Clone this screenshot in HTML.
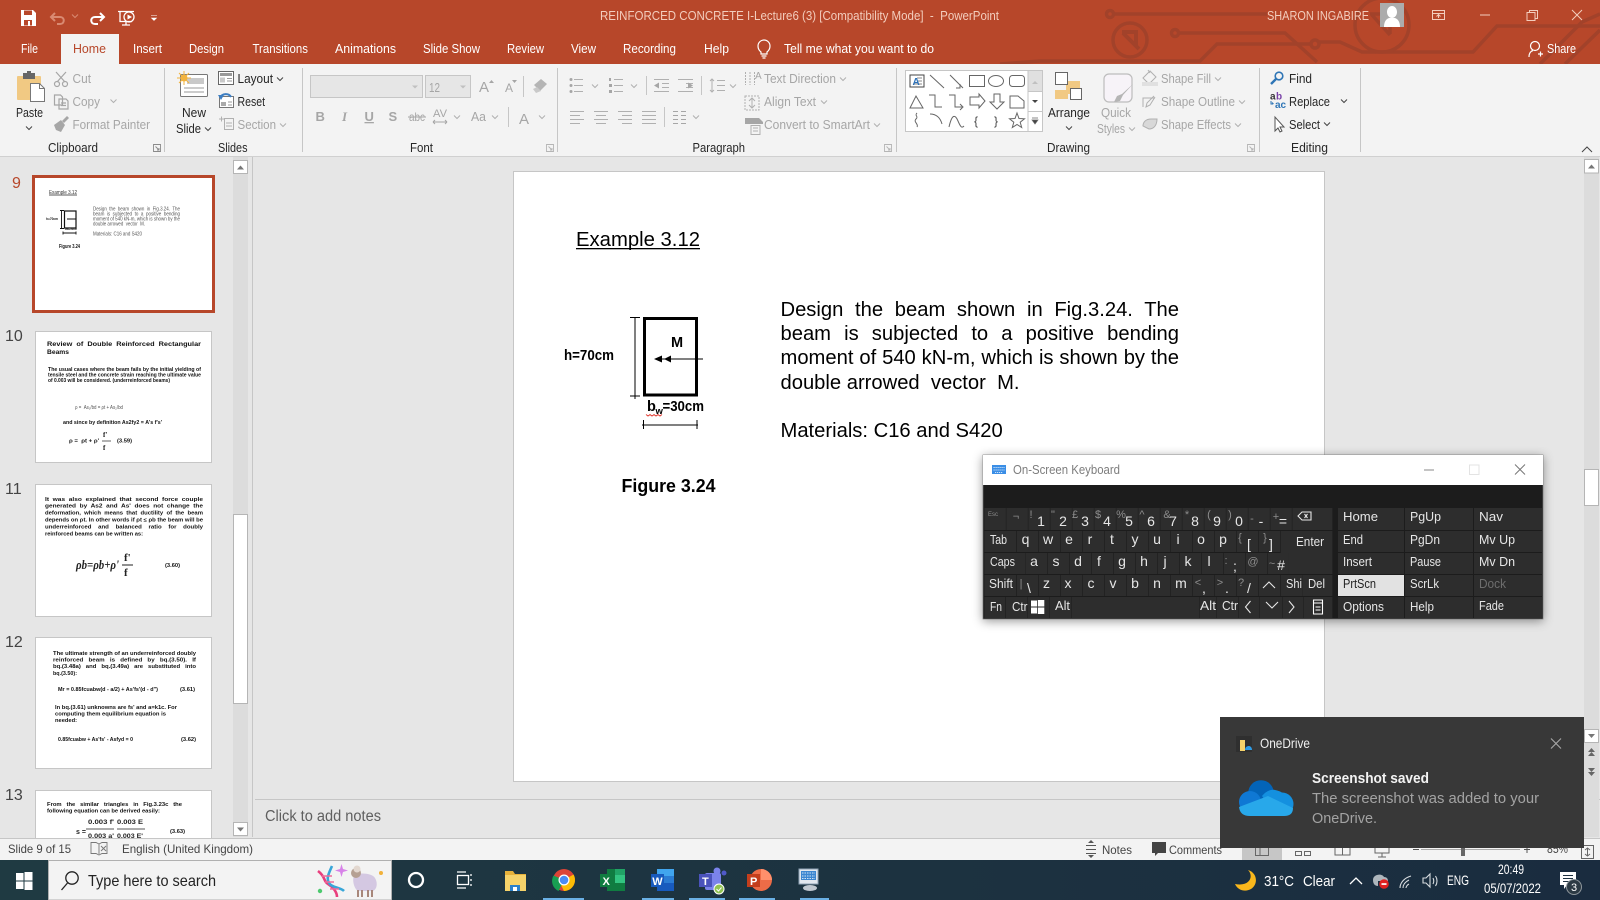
<!DOCTYPE html>
<html><head><meta charset="utf-8"><title>PowerPoint</title>
<style>
html,body{margin:0;padding:0;width:1600px;height:900px;overflow:hidden;background:#e6e6e6}
svg{position:absolute;left:0;top:0;display:block}
svg text{font-family:"Liberation Sans",sans-serif;white-space:pre}
.w{fill:#fff;font-size:13px}.k{fill:#262626;font-size:13px}.d{fill:#a6a6a6;font-size:13px}
.g{fill:#444;font-size:12px}
.kb{fill:#e6e6e6;font-size:13px}.kk{fill:#e6e6e6;font-size:14px;text-anchor:middle}.ks{fill:#8d8d8d;font-size:11px;text-anchor:middle}
.t{fill:#111;font-size:5px;font-weight:bold}.tg{fill:#555;font-size:5px}
.l{position:absolute;left:780.5px;width:398.5px;font:20.2px/24px "Liberation Sans",sans-serif;color:#000;white-space:nowrap;text-align:justify;text-align-last:justify}
</style></head><body>
<svg width="1600" height="900" viewBox="0 0 1600 900" xmlns="http://www.w3.org/2000/svg">
<defs>
<path id="ch" d="M-3-1.5 0 1.5 3-1.5" fill="none"/>
<linearGradient id="tb" x1="0" x2="1" y1="0" y2="0"><stop offset="0" stop-color="#1f3a42"/><stop offset="1" stop-color="#1a2c3f"/></linearGradient>
<filter id="sh" x="-5%" y="-5%" width="110%" height="115%"><feDropShadow dx="0" dy="2" stdDeviation="5" flood-color="#000" flood-opacity=".4"/></filter>
</defs>

<!-- title / tabs -->
<rect width="1600" height="64" fill="#b7472a"/>
<g fill="none" stroke="#a2422a" stroke-width="3.5">
<circle cx="1110" cy="14" r="3.5"/><path d="M1114 14H1267"/>
<circle cx="1130" cy="40" r="17"/><path d="M1122 32h14v14M1123 33l16 16" stroke-width="4"/>
<circle cx="1175" cy="33" r="3.5"/><path d="M1179 33H1285L1317 62"/>
<circle cx="1315" cy="44" r="4"/><path d="M1000 64 1040 61H1200L1217 44H1311M1319 42H1340L1362 52H1473L1497 26H1600"/>
<circle cx="1382" cy="25" r="27"/><path d="M1370 14h20v20M1372 15l18 20"/>
<path d="M1540 64 1582 22 1600 14M1565 64 1600 30"/>
</g>
<text class="w" x="600" y="20" textLength="399" lengthAdjust="spacingAndGlyphs" style="fill:#f3cdbd;font-size:12.5px">REINFORCED CONCRETE I-Lecture6 (3) [Compatibility Mode]  -  PowerPoint</text>
<text class="w" x="1267" y="20" textLength="102" lengthAdjust="spacingAndGlyphs" style="fill:#f3cdbd;font-size:12.5px">SHARON INGABIRE</text>
<rect x="1380" y="3" width="24" height="24" fill="#acacac"/>
<path d="M1392 6c3 0 5 3 5 6s-2 6-5 6-5-3-5-6 2-6 5-6ZM1384 27c0-5 2-8 5-9h6c3 1 5 4 5 9Z" fill="#fff"/>
<!-- window controls -->
<g fill="none" stroke="#f3cdbd" stroke-width="1">
<path d="M1432.500 10.500h12v9h-12zM1432.500 13.500h12M1438.500 18v-3M1436.500 16.500l2-2 2 2"/>
<path d="M1480 15h10"/>
<path d="M1527 12.500h8v8h-8zM1529.500 12.500v-2h8v8h-2"/>
<path d="M1572 10l10 10M1582 10l-10 10"/>
</g>
<!-- QAT -->
<path d="M21 10h12l3 3v13H21Z" fill="#fff"/><rect x="24" y="10.500" width="8" height="4.500" fill="#b7472a"/><rect x="24" y="20" width="8" height="5.500" fill="#b7472a"/><rect x="28" y="21" width="2" height="4.500" fill="#fff"/>
<g fill="none" stroke="#d98a72" stroke-width="2"><path d="M52 17h8c5 0 5 7 0 7h-3M55 13l-4 4 4 4"/></g>
<use href="#ch" x="75" y="16" stroke="#d98a72"/>
<g fill="none" stroke="#fff" stroke-width="2"><path d="M103 17h-8c-5 0-5 7 0 7h3M100 13l4 4-4 4"/></g>
<g fill="none" stroke="#fff" stroke-width="1.300"><path d="M118 11.500h16M120 11.500v10h12M126 22v3M122 25h8"/><circle cx="129" cy="17" r="5"/></g><path d="M127.500 14.500 132 17l-4.500 2.500Z" fill="#fff"/>
<path d="M151 15.500h6M151.500 18h5l-2.500 2.500Z" fill="#fff" stroke="#fff" stroke-width=".6"/>

<rect x="61" y="34" width="58" height="30" fill="#f3f3f3"/>
<g style="font-size:13px">
<text class="w" x="21" y="53" textLength="17" lengthAdjust="spacingAndGlyphs">File</text>
<text x="73" y="53" textLength="33" lengthAdjust="spacingAndGlyphs" style="fill:#b7472a;font-size:13px">Home</text>
<text class="w" x="133" y="53" textLength="29" lengthAdjust="spacingAndGlyphs">Insert</text>
<text class="w" x="189" y="53" textLength="35" lengthAdjust="spacingAndGlyphs">Design</text>
<text class="w" x="252.500" y="53" textLength="55.500" lengthAdjust="spacingAndGlyphs">Transitions</text>
<text class="w" x="335" y="53" textLength="61" lengthAdjust="spacingAndGlyphs">Animations</text>
<text class="w" x="423" y="53" textLength="57" lengthAdjust="spacingAndGlyphs">Slide Show</text>
<text class="w" x="507" y="53" textLength="37" lengthAdjust="spacingAndGlyphs">Review</text>
<text class="w" x="571" y="53" textLength="25" lengthAdjust="spacingAndGlyphs">View</text>
<text class="w" x="623" y="53" textLength="53" lengthAdjust="spacingAndGlyphs">Recording</text>
<text class="w" x="704" y="53" textLength="25" lengthAdjust="spacingAndGlyphs">Help</text>
<text class="w" x="784" y="53" textLength="150" lengthAdjust="spacingAndGlyphs">Tell me what you want to do</text>
<text class="w" x="1547" y="53" textLength="29" lengthAdjust="spacingAndGlyphs">Share</text>
</g>
<g fill="none" stroke="#fff" stroke-width="1.200">
<path d="M761 52c-2-1.500-3-3.500-3-6a6 6 0 0 1 12 0c0 2.500-1 4.500-3 6v2h-6ZM761.500 56h5M762.500 58h3"/>
<circle cx="1535" cy="46" r="4.500"/><path d="M1529 57c0-4 2-6 4-6.500M1538 54h5M1540.500 51.500v5"/>
</g>

<!-- ribbon -->
<rect y="64" width="1600" height="92" fill="#f3f3f3"/>
<rect y="156" width="1600" height="1" fill="#d0d0d0"/>
<g fill="#c6c6c6"><rect x="164" y="68" width="1" height="84"/><rect x="302" y="68" width="1" height="84"/><rect x="557" y="68" width="1" height="84"/><rect x="896" y="68" width="1" height="84"/><rect x="1259" y="68" width="1" height="84"/><rect x="1360" y="68" width="1" height="84"/></g>
<g>
<text class="k" x="48" y="152" textLength="50" lengthAdjust="spacingAndGlyphs">Clipboard</text>
<text class="k" x="218" y="152" textLength="29.500" lengthAdjust="spacingAndGlyphs">Slides</text>
<text class="k" x="410" y="152" textLength="23" lengthAdjust="spacingAndGlyphs">Font</text>
<text class="k" x="692.500" y="152" textLength="52.500" lengthAdjust="spacingAndGlyphs">Paragraph</text>
<text class="k" x="1047" y="152" textLength="43" lengthAdjust="spacingAndGlyphs">Drawing</text>
<text class="k" x="1291" y="152" textLength="37" lengthAdjust="spacingAndGlyphs">Editing</text>
</g>
<!-- launchers -->
<g fill="none" stroke="#8a8a8a" stroke-width=".9"><path d="M153.500 144.500h7v7h-7zM155.500 146.500l3.500 3.500M159 148v2h-2"/></g>
<g fill="none" stroke="#b5b5b5" stroke-width=".9"><path d="M546.500 144.500h7v7h-7zM548.500 146.500l3.500 3.500M552 148v2h-2"/><path d="M884.500 144.500h7v7h-7zM886.500 146.500l3.500 3.500M890 148v2h-2"/><path d="M1247.500 144.500h7v7h-7zM1249.500 146.500l3.500 3.500M1253 148v2h-2"/></g>
<path d="M1582 152l5-5 5 5" fill="none" stroke="#444" stroke-width="1"/>

<!-- clipboard -->
<rect x="17" y="76" width="24" height="24" rx="1" fill="#f1c983"/><rect x="23" y="73" width="12" height="6" fill="#666"/><rect x="27" y="71" width="4" height="3" fill="#666"/>
<path d="M30.500 83.500h9l5 5v13h-14Z" fill="#fff" stroke="#777"/><path d="M39.500 83.500v5h5" fill="none" stroke="#777"/>
<text class="k" x="16" y="117" textLength="27" lengthAdjust="spacingAndGlyphs">Paste</text><use href="#ch" x="29" y="128" stroke="#444"/>
<g fill="none" stroke="#a6a6a6" stroke-width="1.200"><path d="M56 72l9 10M66 72l-9 10"/><circle cx="57" cy="84" r="2.500"/><circle cx="65" cy="84" r="2.500"/><path d="M54.500 95h6l2 2v8h-8zM59 99h7l2 2v8h-9zM61 103h5M61 105.500h5"/></g>
<path d="M54 125l7-5 4 5-4 7-5-2Z" fill="#a6a6a6"/><path d="M62 121l5-5 2 2-5 5Z" fill="#a6a6a6"/>
<text class="d" x="72.500" y="83" textLength="18.500" lengthAdjust="spacingAndGlyphs">Cut</text>
<text class="d" x="72.500" y="106" textLength="27.500" lengthAdjust="spacingAndGlyphs">Copy</text><use href="#ch" x="113.500" y="101" stroke="#b0b0b0"/>
<text class="d" x="72.500" y="129" textLength="77.500" lengthAdjust="spacingAndGlyphs">Format Painter</text>
<!-- slides -->
<rect x="180.500" y="74.500" width="27" height="22" rx="1" fill="#fff" stroke="#777"/><rect x="187" y="78" width="17" height="6" fill="#c9c9c9"/><path d="M184 88h20M184 92h20" stroke="#999"/>
<circle cx="184" cy="78" r="3.500" fill="#f2b33d"/><path d="M184 71v14M177 78h14M179 73l10 10M189 73l-10 10" stroke="#f2b33d"/>
<text class="k" x="182" y="117" textLength="24" lengthAdjust="spacingAndGlyphs">New</text>
<text class="k" x="176" y="133" textLength="25" lengthAdjust="spacingAndGlyphs">Slide</text><use href="#ch" x="208" y="129" stroke="#444"/>
<rect x="218.500" y="71.500" width="15" height="13" fill="#fff" stroke="#666"/><rect x="220" y="73" width="12" height="3" fill="#999"/><rect x="220" y="77.500" width="5" height="5" fill="#c9c9c9"/><path d="M227 78.500h5M227 81h5" stroke="#999"/>
<text class="k" x="237.500" y="83" textLength="35.500" lengthAdjust="spacingAndGlyphs">Layout</text><use href="#ch" x="280" y="79" stroke="#444"/>
<rect x="219.500" y="96.500" width="14" height="11" fill="#fff" stroke="#777"/><rect x="221" y="102" width="5" height="4" fill="#aaa"/><path d="M228 102h4M228 105h4" stroke="#999"/>
<path d="M220 98c2-5 9-5 11-1" fill="none" stroke="#3d7ec2" stroke-width="2"/><path d="M218 95l6 0-3 5Z" fill="#3d7ec2"/>
<text class="k" x="237.500" y="106" textLength="27.500" lengthAdjust="spacingAndGlyphs">Reset</text>
<g stroke="#b0b0b0" fill="none"><path d="M224.500 118.500h9v11h-9zM226 123h6M226 126h6M219 119h5M221.500 116.500v5"/></g>
<text class="d" x="237.500" y="129" textLength="38.500" lengthAdjust="spacingAndGlyphs">Section</text><use href="#ch" x="283" y="125" stroke="#b0b0b0"/>
<!-- font -->
<rect x="310.500" y="75.500" width="112" height="22" fill="#e6e6e6" stroke="#c6c6c6"/><path d="M412 85.500h6l-3 3Z" fill="#c0c0c0"/>
<rect x="425.500" y="75.500" width="45" height="22" fill="#e6e6e6" stroke="#c6c6c6"/><path d="M460 85.500h6l-3 3Z" fill="#c0c0c0"/>
<text class="d" x="429" y="92" textLength="11" lengthAdjust="spacingAndGlyphs">12</text>
<g fill="#a6a6a6">
<text x="479" y="92" style="font-size:15px">A</text><text x="505" y="92" style="font-size:12px">A</text>
<text x="519" y="124" style="font-size:15px">A</text>
</g>
<path d="M489 83h5l-2.500-3ZM512 80h5l-2.500 3Z" fill="#a6a6a6"/>
<rect x="523" y="76" width="1" height="21" fill="#c6c6c6"/><rect x="508" y="107" width="1" height="20" fill="#c6c6c6"/>
<path d="M534 85l7-6 6 5-7 7Z" fill="#b5b5b5"/><path d="M533 89l3 4 5-2-4-4Z" fill="#c9c9c9"/>
<g fill="#a6a6a6">
<text x="315.500" y="121" style="font-size:13px;font-weight:bold">B</text>
<text x="342" y="121" style="font-size:13px;font-style:italic;font-family:'Liberation Serif',serif;font-weight:bold">I</text>
<text x="364.500" y="121" style="font-size:13px;font-weight:bold;text-decoration:underline">U</text>
<text x="388.500" y="121" style="font-size:13px;font-weight:bold">S</text>
<text x="409" y="121" textLength="16" lengthAdjust="spacingAndGlyphs" style="font-size:12px">abc</text>
<text x="433" y="117" textLength="14" lengthAdjust="spacingAndGlyphs" style="font-size:11px">AV</text>
<text x="471" y="121" textLength="15" lengthAdjust="spacingAndGlyphs" style="font-size:13px">Aa</text>
</g>
<path d="M408 117h18M433 122h14M433 122l2-2M433 122l2 2M447 122l-2-2M447 122l-2 2" stroke="#a6a6a6" fill="none"/>
<g stroke="#b0b0b0"><use href="#ch" x="457" y="117"/><use href="#ch" x="495" y="117"/><use href="#ch" x="542" y="117"/></g>
<!-- paragraph -->
<g stroke="#b0b0b0" fill="none">
<path d="M574 79.500h9M574 85.500h9M574 91.500h9M614 79.500h9M614 85.500h9M614 91.500h9"/>
<path d="M654 79.500h15M662 83.500h7M662 87.500h7M654 91.500h15M678 79.500h15M686 83.500h7M686 87.500h7M678 91.500h15"/>
<path d="M717 80.500h8M717 85.500h8M717 90.500h8M712 79v13M710 81l2-2 2 2M710 90l2 2 2-2"/>
<path d="M570 111.500h14M570 115.500h10M570 119.500h14M570 123.500h10"/>
<path d="M594 111.500h14M596 115.500h10M594 119.500h14M596 123.500h10"/>
<path d="M618 111.500h14M622 115.500h10M618 119.500h14M622 123.500h10"/>
<path d="M642 111.500h14M642 115.500h14M642 119.500h14M642 123.500h14"/>
<path d="M673 111.500h5M673 115.500h5M673 119.500h5M673 123.500h5M681 111.500h5M681 115.500h5M681 119.500h5M681 123.500h5" stroke="#a6a6a6"/>
<use href="#ch" x="595" y="86"/><use href="#ch" x="634" y="86"/><use href="#ch" x="733" y="86"/><use href="#ch" x="696" y="117"/>
<path d="M745.500 72v13M750 72v13M754.500 72v13M745 96h14v14h-14z" stroke-dasharray="2 1"/>
<path d="M752 98v10M749 101l3-3 3 3M749 105l3 3 3-3"/>
<path d="M751 125.500h9v9h-9zM753 128h5M753 131h5"/>
</g>
<g fill="#a6a6a6">
<circle cx="571" cy="79.500" r="1.500"/><circle cx="571" cy="85.500" r="1.500"/><circle cx="571" cy="91.500" r="1.500"/>
<path d="M654 85.500l5-3v6ZM693 85.500l-5-3v6Z"/>
<rect x="609" y="78" width="2" height="3"/><rect x="609" y="84" width="3" height="3"/><rect x="609" y="90" width="3" height="3"/>
<path d="M745 118h14l4 4v2h-18Z"/>
</g>
<rect x="646" y="76" width="1" height="19" fill="#c6c6c6"/><rect x="701" y="76" width="1" height="19" fill="#c6c6c6"/><rect x="664" y="107" width="1" height="20" fill="#c6c6c6"/>
<text x="755" y="79" style="fill:#a6a6a6;font-size:10px">A</text>
<text class="d" x="764" y="83" textLength="72" lengthAdjust="spacingAndGlyphs">Text Direction</text><use href="#ch" x="843" y="79" stroke="#b0b0b0"/>
<text class="d" x="764" y="106" textLength="52" lengthAdjust="spacingAndGlyphs">Align Text</text><use href="#ch" x="824" y="102" stroke="#b0b0b0"/>
<text class="d" x="764" y="129" textLength="106" lengthAdjust="spacingAndGlyphs">Convert to SmartArt</text><use href="#ch" x="877" y="125" stroke="#b0b0b0"/>
<!-- gallery -->
<rect x="905.500" y="70.500" width="137" height="61" fill="#fff" stroke="#c6c6c6"/>
<rect x="1028" y="71" width="14" height="20" fill="#e0e0e0"/><path d="M1028 70.500v61M1028 91.500h14M1028 111.500h14" stroke="#c6c6c6"/>
<path d="M1032 84l3-3 3 3Z" fill="#c0c0c0"/><path d="M1032 100h6l-3 3Z" fill="#444"/><path d="M1032 118h6M1032 120h6l-3 4Z" fill="#444" stroke="#666" stroke-width=".7"/>
<g fill="none" stroke="#666">
<rect x="910" y="75" width="14" height="12" stroke="#444"/><path d="M917 78h5M917 81h5M913 84h9" stroke="#888"/>
<path d="M930 75l14 13M950 75l13 13M960 84v4h-4"/>
<rect x="969.500" y="75.500" width="15" height="11"/><ellipse cx="996" cy="81" rx="7.500" ry="5.500"/><rect x="1009.500" y="75.500" width="15" height="11" rx="3"/>
<path d="M910 108l6-12 7 12ZM929 95h6v12h7M949 95h6v12h7M960 104l3 3-3 3M970 97h9v-3l6 7-6 7v-3h-9ZM994 94h6v8h4l-7 7-7-7h4ZM1010 96h8l6 5v7h-14Z"/>
<path d="M917 113c-3 3 2 3-1 6s3 5 1 8M930 114c6 0 10 3 12 10M949 127c3-13 6-13 9-6s4 7 6 5"/>
</g>
<text x="912.500" y="85" style="fill:#2b70b8;font-size:10px;font-weight:bold">A</text>
<text x="974" y="125" style="fill:#444;font-size:12px">{</text><text x="994" y="125" style="fill:#444;font-size:12px">}</text>
<path d="M1017 113l2 5.500 5.500.3-4.300 3.400 1.500 5.300-4.700-3-4.700 3 1.500-5.300-4.300-3.400 5.500-.3Z" fill="none" stroke="#666"/>
<!-- arrange -->
<rect x="1066" y="81" width="14" height="13" fill="#f1c983"/><rect x="1055" y="90" width="13" height="9" fill="#f1c983"/>
<rect x="1055.500" y="72.500" width="12" height="12" fill="#fff" stroke="#666"/><rect x="1070.500" y="88.500" width="11" height="11" fill="#fff" stroke="#666"/>
<text class="k" x="1048" y="117" textLength="42" lengthAdjust="spacingAndGlyphs">Arrange</text><use href="#ch" x="1069" y="128" stroke="#444"/>
<!-- quick styles -->
<rect x="1104" y="74" width="28" height="28" rx="5" fill="#f7f3f8" stroke="#bdbdbd" stroke-width="1.200"/><path d="M1133 84l-10 11-3 6-6 1 3-6 5-2Z" fill="#b5b5b5"/>
<text class="d" x="1101" y="117" textLength="30" lengthAdjust="spacingAndGlyphs">Quick</text>
<text class="d" x="1097" y="133" textLength="28" lengthAdjust="spacingAndGlyphs">Styles</text><use href="#ch" x="1132" y="129" stroke="#b0b0b0"/>
<g fill="none" stroke="#b0b0b0"><path d="M1143 78l7-7 6 6-7 7ZM1148 70l2 3"/><path d="M1143 107l0-9h12M1155 97l-5 8-4 2 1-4 7-7"/></g>
<rect x="1142" y="82" width="16" height="4" fill="#e0e0e0"/>
<path d="M1143 126c0-4 3-7 8-7h6c0 6-3 10-8 10Z" fill="#d8d8d8" stroke="#b0b0b0"/>
<text class="d" x="1161" y="83" textLength="50" lengthAdjust="spacingAndGlyphs">Shape Fill</text><use href="#ch" x="1218" y="79" stroke="#b0b0b0"/>
<text class="d" x="1161" y="106" textLength="74" lengthAdjust="spacingAndGlyphs">Shape Outline</text><use href="#ch" x="1242" y="102" stroke="#b0b0b0"/>
<text class="d" x="1161" y="129" textLength="70" lengthAdjust="spacingAndGlyphs">Shape Effects</text><use href="#ch" x="1238" y="125" stroke="#b0b0b0"/>
<!-- editing -->
<circle cx="1279" cy="76" r="3.800" fill="none" stroke="#2e75b6" stroke-width="1.600"/><path d="M1276 79l-5 5" stroke="#2e75b6" stroke-width="2.400"/>
<text x="1270" y="99.500" style="fill:#333;font-size:10px;font-weight:bold">a</text><text x="1276" y="99.500" style="fill:#7a43a8;font-size:10px;font-weight:bold">b</text>
<text x="1275" y="108" style="fill:#2e75b6;font-size:10px;font-weight:bold">ac</text><path d="M1271 101v3h2M1272 102.500l1.500 1.500" fill="none" stroke="#2e75b6"/>
<path d="M1275 117v14l3-3 2 4 2-1-2-4h4Z" fill="#fff" stroke="#555"/>
<text class="k" x="1289" y="83" textLength="23" lengthAdjust="spacingAndGlyphs">Find</text>
<text class="k" x="1289" y="106" textLength="41" lengthAdjust="spacingAndGlyphs">Replace</text><use href="#ch" x="1344" y="101" stroke="#444"/>
<text class="k" x="1289" y="129" textLength="31" lengthAdjust="spacingAndGlyphs">Select</text><use href="#ch" x="1327" y="124" stroke="#444"/>

<!-- thumbnail pane -->
<rect x="233" y="157" width="15" height="680" fill="#dcdcdc"/>
<rect x="252" y="157" width="1" height="680" fill="#c6c6c6"/>
<rect x="233.500" y="160.500" width="14" height="13" fill="#fff" stroke="#b5b5b5"/><path d="M237 169.500l3.500-4 3.500 4Z" fill="#777"/>
<rect x="233.500" y="514.500" width="14" height="189" fill="#fff" stroke="#b5b5b5"/>
<rect x="233.500" y="822.500" width="14" height="13" fill="#fff" stroke="#b5b5b5"/><path d="M237 827.500h7l-3.500 4Z" fill="#777"/>

<text x="12" y="188" style="fill:#b7472a;font-size:16px">9</text>
<text x="5" y="341" style="fill:#444;font-size:16px">10</text>
<text x="5" y="494" style="fill:#444;font-size:16px">11</text>
<text x="5" y="647" style="fill:#444;font-size:16px">12</text>
<text x="5" y="800" style="fill:#444;font-size:16px">13</text>

<!-- thumb 9 -->
<rect x="33.500" y="176.500" width="180" height="135" fill="#fff" stroke="#b7472a" stroke-width="3"/>
<text class="tg" x="49" y="194" textLength="28" lengthAdjust="spacingAndGlyphs" style="fill:#333">Example 3.12</text><path d="M49 195h28" stroke="#222" stroke-width=".8"/>
<text class="tg" x="93" y="210.500" textLength="87" lengthAdjust="spacingAndGlyphs">Design  the  beam  shown  in  Fig.3.24.  The</text>
<text class="tg" x="93" y="215.500" textLength="87" lengthAdjust="spacingAndGlyphs">beam  is  subjected  to  a  positive  bending</text>
<text class="tg" x="93" y="220.500" textLength="87" lengthAdjust="spacingAndGlyphs">moment of 540 kN-m, which is shown by the</text>
<text class="tg" x="93" y="225.500" textLength="52" lengthAdjust="spacingAndGlyphs">double arrowed  vector  M.</text>
<text class="tg" x="93" y="235.500" textLength="49" lengthAdjust="spacingAndGlyphs">Materials: C16 and S420</text>
<text class="t" x="59" y="248" textLength="21" lengthAdjust="spacingAndGlyphs">Figure 3.24</text>
<text class="t" x="46" y="220" textLength="12" lengthAdjust="spacingAndGlyphs" style="font-size:3.500px">h=70cm</text>
<rect x="64.500" y="211" width="11.500" height="17" fill="none" stroke="#111" stroke-width="1.200"/>
<path d="M61.500 210v19M60 210.500h4M60 228.500h4M67 219h9M63 233h13M63 231.500v3M76 231.500v3" stroke="#111" stroke-width=".9" fill="none"/>
<text class="t" x="65" y="230" textLength="12" lengthAdjust="spacingAndGlyphs" style="font-size:3.500px">bw=30cm</text>

<!-- thumb 10 -->
<rect x="35.500" y="331.500" width="176" height="131" fill="#fff" stroke="#c6c6c6"/>
<text class="t" x="47" y="346" textLength="154" lengthAdjust="spacingAndGlyphs" style="font-size:6.500px">Review  of  Double  Reinforced  Rectangular</text>
<text class="t" x="47" y="354" textLength="22" lengthAdjust="spacingAndGlyphs" style="font-size:6.500px">Beams</text>
<text class="t" x="48" y="371" textLength="153" lengthAdjust="spacingAndGlyphs">The usual cases where the beam fails by the initial yielding of</text>
<text class="t" x="48" y="376.500" textLength="153" lengthAdjust="spacingAndGlyphs">tensile steel and the concrete strain reaching the ultimate value</text>
<text class="t" x="48" y="382" textLength="122" lengthAdjust="spacingAndGlyphs">of 0.003 will be considered. (underreinforced beams)</text>
<text class="tg" x="75" y="409" textLength="48" lengthAdjust="spacingAndGlyphs">ρ =  As₁/bd = ρt + As₂/bd</text>
<text class="t" x="63" y="424" textLength="99" lengthAdjust="spacingAndGlyphs">and since by definition As2fy2 = A's f's'</text>
<text class="t" x="69" y="442.500" textLength="30" lengthAdjust="spacingAndGlyphs">ρ =  ρt + ρ'</text>
<text class="t" x="103" y="437" style="font-size:7px;font-family:'Liberation Serif',serif">f'</text>
<text class="t" x="103" y="450" style="font-size:7px;font-family:'Liberation Serif',serif">f</text><path d="M102 441h9" stroke="#222" stroke-width=".7"/>
<text class="t" x="117" y="442.500" textLength="15" lengthAdjust="spacingAndGlyphs">(3.59)</text>

<!-- thumb 11 -->
<rect x="35.500" y="484.500" width="176" height="132" fill="#fff" stroke="#c6c6c6"/>
<text class="t" x="45" y="501" textLength="158" lengthAdjust="spacingAndGlyphs">It  was  also  explained  that  second  force  couple</text>
<text class="t" x="45" y="507.500" textLength="158" lengthAdjust="spacingAndGlyphs">generated  by  As2  and  As'  does  not  change  the</text>
<text class="t" x="45" y="514.500" textLength="158" lengthAdjust="spacingAndGlyphs">deformation,  which  means  that  ductility  of  the  beam</text>
<text class="t" x="45" y="521.500" textLength="158" lengthAdjust="spacingAndGlyphs">depends on ρt. In other words if ρt ≤ ρb the beam will be</text>
<text class="t" x="45" y="528.500" textLength="158" lengthAdjust="spacingAndGlyphs">underreinforced    and    balanced    ratio    for    doubly</text>
<text class="t" x="45" y="535.500" textLength="98" lengthAdjust="spacingAndGlyphs">reinforced beams can be written as:</text>
<text x="76" y="569" textLength="43" lengthAdjust="spacingAndGlyphs" style="fill:#222;font-size:13px;font-weight:bold;font-style:italic;font-family:'Liberation Serif',serif">ρb=ρb+ρ'</text>
<text x="124" y="561" style="fill:#222;font-size:11px;font-weight:bold;font-family:'Liberation Serif',serif">f'</text>
<text x="124" y="576" style="fill:#222;font-size:11px;font-weight:bold;font-family:'Liberation Serif',serif">f</text><path d="M122 565h11" stroke="#222"/>
<text class="t" x="165" y="567" textLength="15" lengthAdjust="spacingAndGlyphs">(3.60)</text>

<!-- thumb 12 -->
<rect x="35.500" y="637.500" width="176" height="131" fill="#fff" stroke="#c6c6c6"/>
<text class="t" x="53" y="655" textLength="143" lengthAdjust="spacingAndGlyphs">The ultimate strength of an underreinforced doubly</text>
<text class="t" x="53" y="661.500" textLength="143" lengthAdjust="spacingAndGlyphs">reinforced   beam   is   defined   by   bq.(3.50).   If</text>
<text class="t" x="53" y="668" textLength="143" lengthAdjust="spacingAndGlyphs">bq.(3.48a)   and   bq.(3.49a)   are   substituted   into</text>
<text class="t" x="53" y="675" textLength="24" lengthAdjust="spacingAndGlyphs">bq.(3.50):</text>
<text class="t" x="58" y="691" textLength="100" lengthAdjust="spacingAndGlyphs">Mr = 0.85fcuabw(d - a/2) + As'fs'(d - d'')</text>
<text class="t" x="180" y="691" textLength="15" lengthAdjust="spacingAndGlyphs">(3.61)</text>
<text class="t" x="55" y="709" textLength="122" lengthAdjust="spacingAndGlyphs">In bq.(3.61) unknowns are fs' and a=k1c. For</text>
<text class="t" x="55" y="715.500" textLength="111" lengthAdjust="spacingAndGlyphs">computing them equilibrium equation is</text>
<text class="t" x="55" y="722" textLength="22" lengthAdjust="spacingAndGlyphs">needed:</text>
<text class="t" x="58" y="741" textLength="75" lengthAdjust="spacingAndGlyphs">0.85fcuabw + As'fs' - Asfyd = 0</text>
<text class="t" x="181" y="741" textLength="15" lengthAdjust="spacingAndGlyphs">(3.62)</text>

<!-- thumb 13 -->
<rect x="35.500" y="790.500" width="176" height="50" fill="#fff" stroke="#c6c6c6"/>
<text class="t" x="47" y="806" textLength="135" lengthAdjust="spacingAndGlyphs">From   the   similar   triangles   in   Fig.3.23c   the</text>
<text class="t" x="47" y="812.500" textLength="113" lengthAdjust="spacingAndGlyphs">following equation can be derived easily:</text>
<text x="88" y="824" textLength="26" lengthAdjust="spacingAndGlyphs" style="fill:#222;font-size:6px;font-weight:bold">0.003 f'</text>
<text x="117" y="824" textLength="26" lengthAdjust="spacingAndGlyphs" style="fill:#222;font-size:6px;font-weight:bold">0.003 E</text>
<text x="76" y="834" style="fill:#222;font-size:7px;font-weight:bold">s =</text>
<path d="M86 829h28M117 829h28" stroke="#222" stroke-width=".7"/>
<text x="88" y="838" textLength="26" lengthAdjust="spacingAndGlyphs" style="fill:#222;font-size:6px;font-weight:bold">0.003 a'</text>
<text x="117" y="838" textLength="26" lengthAdjust="spacingAndGlyphs" style="fill:#222;font-size:6px;font-weight:bold">0.003 E'</text>
<text class="t" x="170" y="833" textLength="15" lengthAdjust="spacingAndGlyphs">(3.63)</text>
<rect x="0" y="838" width="233" height="3" fill="#f3f3f3"/>

<!-- slide -->
<rect x="513.500" y="171.500" width="811" height="610" fill="#fff" stroke="#c6c6c6"/>
<text x="576" y="246" textLength="124" lengthAdjust="spacingAndGlyphs" style="fill:#000;font-size:20.500px">Example 3.12</text>
<rect x="576" y="248" width="124" height="1.300" fill="#000"/>
<rect x="644.500" y="318.500" width="52" height="76.500" fill="none" stroke="#000" stroke-width="3"/>
<path d="M635 317v82M630 317.500h10M630 396h10M642 425h56M643.500 420v9M697 420v9M660 359h43" stroke="#000" fill="none"/>
<path d="M654 359l8-3.500v7ZM664 359l7-3.500v7Z" fill="#000"/>
<text x="671" y="347" style="fill:#000;font-size:14.500px;font-weight:bold">M</text>
<text x="564" y="360" textLength="50" lengthAdjust="spacingAndGlyphs" style="fill:#000;font-size:14.500px;font-weight:bold">h=70cm</text>
<text x="647" y="411" style="fill:#000;font-size:14.500px;font-weight:bold">b</text>
<text x="655.500" y="414" style="fill:#000;font-size:9.500px;font-weight:bold">w</text>
<text x="662.500" y="411" textLength="41.500" lengthAdjust="spacingAndGlyphs" style="fill:#000;font-size:14.500px;font-weight:bold">=30cm</text>
<path d="M646 414.500l2 1.500 2-1.500 2 1.500 2-1.500 2 1.500 2-1.500 2 1.500 2-1.500" fill="none" stroke="#e0342a" stroke-width=".9"/>
<text x="621.500" y="492" textLength="94" lengthAdjust="spacingAndGlyphs" style="fill:#000;font-size:18px;font-weight:bold">Figure 3.24</text>

<!-- notes -->
<rect x="255" y="799" width="1345" height="1" fill="#c6c6c6"/>
<text x="265" y="821" textLength="116" lengthAdjust="spacingAndGlyphs" style="fill:#5f5f5f;font-size:15.500px">Click to add notes</text>

<!-- right scrollbar -->
<rect x="1584" y="157" width="15" height="680" fill="#dcdcdc"/>
<rect x="1584.500" y="159.500" width="14" height="13.500" fill="#fff" stroke="#b5b5b5"/><path d="M1588 168.500l3.500-4 3.500 4Z" fill="#777"/>
<rect x="1584.500" y="469.500" width="14" height="36" fill="#fff" stroke="#b5b5b5"/>
<rect x="1584.500" y="729.500" width="14" height="13" fill="#fff" stroke="#b5b5b5"/><path d="M1588 734h7l-3.500 4Z" fill="#777"/>
<path d="M1588 752l3.500-4 3.500 4ZM1588 756l3.500-4 3.500 4ZM1588 768l3.500 4 3.500-4ZM1588 772l3.500 4 3.500-4Z" fill="#666"/>

<!-- status -->
<rect y="838" width="1600" height="22" fill="#f3f3f3"/><rect y="838" width="1600" height="1" fill="#c6c6c6"/>
<text class="g" x="8" y="853" textLength="63" lengthAdjust="spacingAndGlyphs">Slide 9 of 15</text>
<path d="M91 842.500h5l3 1.500 3-1.500h5v11h-5l-3 1.500-3-1.500h-5ZM99 844v10" fill="none" stroke="#777" stroke-width=".9"/><path d="M101 846l5 5M106 846l-5 5" stroke="#777" stroke-width=".9"/>
<text class="g" x="122" y="853" textLength="131" lengthAdjust="spacingAndGlyphs">English (United Kingdom)</text>
<path d="M1086 845.500h10M1086 849.500h10M1086 853.500h10" stroke="#555"/><path d="M1091 840l3 3h-6ZM1091 858l3-3h-6Z" fill="#555"/>
<text class="g" x="1102" y="854" textLength="30" lengthAdjust="spacingAndGlyphs">Notes</text>
<path d="M1152 842h14v11h-8l-3 3v-3h-3Z" fill="#444"/>
<text class="g" x="1169" y="854" textLength="53" lengthAdjust="spacingAndGlyphs">Comments</text>
<rect x="1242" y="840" width="40" height="20" fill="#c6c6c6"/>
<g fill="none" stroke="#666"><path d="M1255.500 846.500h13v9h-13zM1260 846.500v9"/><path d="M1295.500 851.500h6v4h-6zM1304.500 851.500h6v4h-6z"/><path d="M1335 847h15v8h-15zM1342.500 847v8"/><path d="M1375 847h14v6h-14zM1382 853v4M1378 857h8"/></g>
<path d="M1421 849.500h99" stroke="#aaa"/><path d="M1413 849.500h6M1524 849.500h6M1527 846v7" stroke="#555"/>
<rect x="1461" y="846" width="4" height="10" fill="#666"/>
<text class="g" x="1547" y="853" textLength="21" lengthAdjust="spacingAndGlyphs">85%</text>
<path d="M1581.500 845.500h12v13h-12zM1587.500 848v8M1585 850l2.500-2 2.500 2M1585 854l2.500 2 2.500-2" fill="none" stroke="#666"/>

<!-- taskbar -->
<rect y="860" width="1600" height="40" fill="url(#tb)"/>
<g fill="#fff"><rect x="16" y="873" width="7.500" height="7.500"/><rect x="24.500" y="872" width="8" height="8.500"/><rect x="16" y="881.500" width="7.500" height="7.500"/><rect x="24.500" y="881.500" width="8" height="8.500"/></g>
<rect x="48" y="860" width="344" height="40" fill="#f3f3f3"/><rect x="48.500" y="860.500" width="343" height="39.500" fill="none" stroke="#b0b0b0"/>
<circle cx="72" cy="878" r="6.200" fill="none" stroke="#222" stroke-width="1.300"/><path d="M67.500 883l-6 7" stroke="#222" stroke-width="1.300"/>
<text x="88" y="886" textLength="128" lengthAdjust="spacingAndGlyphs" style="fill:#222;font-size:16px">Type here to search</text>
<!-- dna + sheep -->
<g fill="none" stroke-width="2.600"><path d="M318 871c8 6 5 10 10 13s9 8 9 13" stroke="#e93e7d"/><path d="M332 866c-3 7-6 12-3 17s11 4 15 8" stroke="#38a6d8"/><path d="M322 876h10M325 882h9M330 889h9" stroke="#ee6d9a" stroke-width="1.500"/></g>
<path d="M340 869l1.500-5 1.500 5 5 1.500-5 1.500-1.500 5-1.500-5-5-1.500Z" fill="#d782e8"/>
<circle cx="320" cy="891" r="2.200" fill="#4cc96e"/><circle cx="381" cy="873" r="2" fill="#f1b13b"/>
<path d="M354 876c4-4 18-3 21 2s2 11-2 13h-15c-4-2-6-11-4-15Z" fill="#d4c8e2"/><circle cx="356" cy="873" r="5" fill="#b5a093"/><circle cx="357" cy="869" r="3.500" fill="#e3d8d0"/>
<path d="M358 890v7M362 890v7M368 890v7M372 890v7" stroke="#a8877a" stroke-width="2"/>
<!-- taskbar btns -->
<circle cx="416" cy="880" r="7" fill="none" stroke="#fff" stroke-width="2.300"/>
<g fill="none" stroke="#fff" stroke-width="1.300"><rect x="457.500" y="875.500" width="11" height="9"/><path d="M457 872h9M457 888h9"/><path d="M471 874v2M471 879v2M471 884v2"/></g>
<path d="M505 871h8l2 3h11v4h-21Z" fill="#e7b23b"/><rect x="505" y="875" width="21" height="16" fill="#f6d36a"/><rect x="510" y="885" width="10" height="6" fill="#2a81cc"/><rect x="513" y="887" width="4" height="4" fill="#fff"/>
<circle cx="564" cy="880" r="11" fill="#dd4437"/><path d="M564 880 573.500 874.500A11 11 0 0 1 564 891L558.500 880Z" fill="#fbbc05"/><path d="M564 880l-5.500 11a11 11 0 0 1-5-15.500Z" fill="#189f52"/><circle cx="564" cy="880" r="5.500" fill="#fff"/><circle cx="564" cy="880" r="4.300" fill="#4a8bf4"/>
<rect x="607" y="869" width="18" height="22" fill="#107c41"/><rect x="615" y="869" width="10" height="6" fill="#21a366"/><rect x="615" y="875" width="10" height="8" fill="#33c481"/><rect x="600" y="874" width="13" height="13" fill="#107c41"/><text x="602.500" y="885" style="fill:#fff;font-size:11px;font-weight:bold">X</text>
<rect x="657" y="869" width="17" height="22" fill="#2b7cd3"/><rect x="657" y="869" width="17" height="7" fill="#41a5ee"/><rect x="657" y="883" width="17" height="8" fill="#185abd"/><rect x="651" y="874" width="13" height="13" fill="#185abd"/><text x="652.200" y="885" style="fill:#fff;font-size:11px;font-weight:bold">W</text>
<rect x="705" y="873" width="16" height="17" rx="2" fill="#7b83eb"/><circle cx="717" cy="871" r="3.500" fill="#7b83eb"/><circle cx="724" cy="873" r="2.500" fill="#5059c9"/><rect x="699" y="874" width="13" height="13" fill="#4b53bc"/><text x="702" y="885" style="fill:#fff;font-size:11px;font-weight:bold">T</text><circle cx="719" cy="889" r="5" fill="#92c353" stroke="#fff"/><path d="M716.500 889l2 2 3-3.500" stroke="#fff" fill="none"/>
<circle cx="761" cy="880" r="11" fill="#ed6c47"/><path d="M761 869a11 11 0 0 1 11 11h-11Z" fill="#ff8f6b"/><rect x="747" y="874" width="13" height="13" fill="#c43e1c"/><text x="750" y="885" style="fill:#fff;font-size:11px;font-weight:bold">P</text>
<rect x="799" y="869" width="19" height="15" fill="#e1e7ee" stroke="#8fa3b5"/><rect x="801" y="871" width="15" height="9" fill="#3b86d1"/><path d="M802 873h13M802 876h13M802 878.500h13" stroke="#fff" stroke-width=".8" stroke-dasharray="1.500 1"/><ellipse cx="810" cy="888" rx="7" ry="3" fill="#bfc7cf"/>
<g fill="#6ab0e4"><rect x="543" y="898" width="41" height="2"/><rect x="642" y="898" width="32" height="2"/><rect x="689" y="898" width="36" height="2"/><rect x="739" y="898" width="36" height="2"/><rect x="800" y="898" width="29" height="2"/></g>
<!-- tray -->
<path d="M1248 870C1254 876 1250 887 1235 884 1238 891 1246 892 1251 889 1258 885 1258 873 1248 870Z" fill="#f9b71c"/>
<text x="1264" y="886" textLength="30" lengthAdjust="spacingAndGlyphs" style="fill:#fff;font-size:15px">31°C</text>
<text x="1303" y="886" textLength="32" lengthAdjust="spacingAndGlyphs" style="fill:#fff;font-size:15px">Clear</text>
<path d="M1350 884l6-6 6 6" fill="none" stroke="#fff" stroke-width="1.300"/>
<path d="M1373 880c0-6 9-7 11-3 3 0 4 2 4 4h-10v5c-3 0-5-2-5-6Z" fill="#aeb6bc"/><circle cx="1384" cy="884" r="4.800" fill="#e02020"/><rect x="1381.500" y="883.200" width="5" height="1.700" fill="#fff"/>
<g fill="none" stroke="#d8dde0" stroke-width="1.100"><path d="M1400 888c0-5 4-10 11-12M1403 888c0-3 2-6 6-8M1406 888c0-1 1-3 3-4"/><path d="M1423 878h3l4-4v13l-4-4h-3ZM1433 878c1 2 1 4 0 6M1435.500 876c2 3 2 7 0 10"/></g>
<text x="1447" y="885" textLength="22" lengthAdjust="spacingAndGlyphs" style="fill:#fff;font-size:14px">ENG</text>
<text x="1498" y="874" textLength="26" lengthAdjust="spacingAndGlyphs" style="fill:#fff;font-size:14px">20:49</text>
<text x="1484" y="893" textLength="57" lengthAdjust="spacingAndGlyphs" style="fill:#fff;font-size:14px">05/07/2022</text>
<path d="M1560 872h16v13h-9l-3 4v-4h-4Z" fill="#fff"/><path d="M1563 875.500h10M1563 878.500h10M1563 881.500h7" stroke="#1f3242" stroke-width="1"/>
<circle cx="1574" cy="887" r="7.500" fill="#2c3a44" stroke="#8f979c"/><text x="1574" y="891" text-anchor="middle" style="fill:#fff;font-size:11px">3</text>

<!-- keyboard -->
<g filter="url(#sh)"><rect x="983" y="455" width="560" height="164" fill="#1a1a1a" stroke="#777" stroke-width=".7"/></g>
<rect x="983" y="455" width="560" height="30" fill="#fff"/>
<rect x="992" y="465" width="14" height="9" fill="#3a8ee6"/><path d="M993.500 467.500h11M993.500 470h11M995 472.500h8" stroke="#fff" stroke-width=".8" stroke-dasharray="1.200 .8"/>
<text x="1013" y="474" textLength="107" lengthAdjust="spacingAndGlyphs" style="fill:#7d7d7d;font-size:13px">On-Screen Keyboard</text>
<path d="M1424 470h10" stroke="#888"/><rect x="1469.500" y="465" width="9.500" height="9.500" fill="none" stroke="#e3e3e3"/><path d="M1515 464.500l10 10M1525 464.500l-10 10" stroke="#777"/>
<g fill="#2d2d2d">
<!-- row1 -->
<rect x="984.400" y="508" width="21.400" height="22"/><rect x="1006.400" y="508" width="21.400" height="22"/><rect x="1028.400" y="508" width="21.400" height="22"/><rect x="1050.400" y="508" width="21.400" height="22"/><rect x="1072.400" y="508" width="21.400" height="22"/><rect x="1094.400" y="508" width="21.400" height="22"/><rect x="1116.400" y="508" width="21.400" height="22"/><rect x="1138.400" y="508" width="21.400" height="22"/><rect x="1160.400" y="508" width="21.400" height="22"/><rect x="1182.400" y="508" width="21.400" height="22"/><rect x="1204.400" y="508" width="21.400" height="22"/><rect x="1226.400" y="508" width="21.400" height="22"/><rect x="1248.400" y="508" width="21.400" height="22"/><rect x="1270.400" y="508" width="21.400" height="22"/><rect x="1292.400" y="508" width="40" height="22"/>
<!-- row2 -->
<rect x="984.400" y="531" width="31.600" height="21"/><rect x="1016.700" y="531" width="21.400" height="21"/><rect x="1038.700" y="531" width="21.400" height="21"/><rect x="1060.700" y="531" width="21.400" height="21"/><rect x="1082.700" y="531" width="21.400" height="21"/><rect x="1104.700" y="531" width="21.400" height="21"/><rect x="1126.700" y="531" width="21.400" height="21"/><rect x="1148.700" y="531" width="21.400" height="21"/><rect x="1170.700" y="531" width="21.400" height="21"/><rect x="1192.700" y="531" width="21.400" height="21"/><rect x="1214.700" y="531" width="21.400" height="21"/><rect x="1236.700" y="531" width="21.400" height="21"/><rect x="1258.700" y="531" width="21.400" height="21"/><rect x="1280.700" y="531" width="51.700" height="43"/>
<!-- row3 -->
<rect x="984.400" y="553" width="41" height="21"/><rect x="1025.800" y="553" width="21.400" height="21"/><rect x="1047.800" y="553" width="21.400" height="21"/><rect x="1069.800" y="553" width="21.400" height="21"/><rect x="1091.800" y="553" width="21.400" height="21"/><rect x="1113.800" y="553" width="21.400" height="21"/><rect x="1135.800" y="553" width="21.400" height="21"/><rect x="1157.800" y="553" width="21.400" height="21"/><rect x="1179.800" y="553" width="21.400" height="21"/><rect x="1201.800" y="553" width="21.400" height="21"/><rect x="1223.800" y="553" width="21.400" height="21"/><rect x="1245.800" y="553" width="21.400" height="21"/><rect x="1267.800" y="553" width="21" height="21"/>
<!-- row4 -->
<rect x="984.400" y="575" width="31.600" height="21"/><rect x="1016.700" y="575" width="21.400" height="21"/><rect x="1038.700" y="575" width="21.400" height="21"/><rect x="1060.700" y="575" width="21.400" height="21"/><rect x="1082.700" y="575" width="21.400" height="21"/><rect x="1104.700" y="575" width="21.400" height="21"/><rect x="1126.700" y="575" width="21.400" height="21"/><rect x="1148.700" y="575" width="21.400" height="21"/><rect x="1170.700" y="575" width="21.400" height="21"/><rect x="1192.700" y="575" width="21.400" height="21"/><rect x="1214.700" y="575" width="21.400" height="21"/><rect x="1236.700" y="575" width="21.400" height="21"/><rect x="1258.700" y="575" width="21.400" height="21"/><rect x="1280.700" y="575" width="22" height="21"/><rect x="1303" y="575" width="29.400" height="21"/>
<!-- row5 -->
<rect x="984.400" y="597" width="21" height="21"/><rect x="1006" y="597" width="21.500" height="21"/><rect x="1028" y="597" width="21.500" height="21"/><rect x="1050" y="597" width="21.500" height="21"/><rect x="1072" y="597" width="127.500" height="21"/><rect x="1200" y="597" width="16.500" height="21"/><rect x="1217" y="597" width="21" height="21"/><rect x="1238.500" y="597" width="21" height="21"/><rect x="1260" y="597" width="22" height="21"/><rect x="1282.500" y="597" width="21" height="21"/><rect x="1304" y="597" width="28.400" height="21"/>
<!-- right pad -->
<rect x="1338" y="508" width="66" height="22"/><rect x="1405" y="508" width="68" height="22"/><rect x="1474" y="508" width="68" height="22"/>
<rect x="1338" y="531" width="66" height="21"/><rect x="1405" y="531" width="68" height="21"/><rect x="1474" y="531" width="68" height="21"/>
<rect x="1338" y="553" width="66" height="21"/><rect x="1405" y="553" width="68" height="21"/><rect x="1474" y="553" width="68" height="21"/>
<rect x="1405" y="575" width="68" height="21"/><rect x="1474" y="575" width="68" height="21"/>
<rect x="1338" y="597" width="66" height="21"/><rect x="1405" y="597" width="68" height="21"/><rect x="1474" y="597" width="68" height="21"/>
</g>
<rect x="1338" y="575" width="66" height="21" fill="#e2e2e2"/>
<text class="ks" x="993" y="516" style="font-size:6px">Esc</text><text class="ks" x="1016" y="520">¬</text>
<text class="ks" x="1031" y="518">!</text><text class="ks" x="1053" y="518">"</text><text class="ks" x="1075" y="518">£</text><text class="ks" x="1098" y="518">$</text><text class="ks" x="1121" y="518">%</text><text class="ks" x="1142" y="518">^</text><text class="ks" x="1167" y="518">&amp;</text><text class="ks" x="1187" y="518">*</text><text class="ks" x="1209" y="518">(</text><text class="ks" x="1230" y="518">)</text><text class="ks" x="1252" y="522">-</text><text class="ks" x="1276" y="520">+</text>
<text class="kk" x="1041" y="526">1</text><text class="kk" x="1063" y="526">2</text><text class="kk" x="1085" y="526">3</text><text class="kk" x="1107" y="526">4</text><text class="kk" x="1129" y="526">5</text><text class="kk" x="1151" y="526">6</text><text class="kk" x="1173" y="526">7</text><text class="kk" x="1195" y="526">8</text><text class="kk" x="1217" y="526">9</text><text class="kk" x="1239" y="526">0</text><text class="kk" x="1261" y="526">-</text><text class="kk" x="1283" y="526">=</text>
<path d="M1298 516l4-4h9v8h-9ZM1304.500 514l3 4M1307.500 514l-3 4" fill="none" stroke="#e6e6e6" stroke-width="1.100"/>
<text class="kb" x="990" y="544" textLength="17" lengthAdjust="spacingAndGlyphs">Tab</text>
<text class="kk" x="1025.500" y="544">q</text><text class="kk" x="1048" y="544">w</text><text class="kk" x="1069" y="544">e</text><text class="kk" x="1090" y="544">r</text><text class="kk" x="1112" y="544">t</text><text class="kk" x="1135" y="544">y</text><text class="kk" x="1157" y="544">u</text><text class="kk" x="1178" y="544">i</text><text class="kk" x="1201" y="544">o</text><text class="kk" x="1223" y="544">p</text>
<text class="ks" x="1240" y="541">{</text><text class="kk" x="1249" y="549">[</text><text class="ks" x="1265" y="541">}</text><text class="kk" x="1271" y="549">]</text>
<text class="kb" x="1296" y="546" textLength="28" lengthAdjust="spacingAndGlyphs">Enter</text>
<text class="kb" x="990" y="566" textLength="25" lengthAdjust="spacingAndGlyphs">Caps</text>
<text class="kk" x="1034" y="566">a</text><text class="kk" x="1056" y="566">s</text><text class="kk" x="1078" y="566">d</text><text class="kk" x="1099" y="566">f</text><text class="kk" x="1122" y="566">g</text><text class="kk" x="1144" y="566">h</text><text class="kk" x="1165" y="566">j</text><text class="kk" x="1188" y="566">k</text><text class="kk" x="1209" y="566">l</text>
<text class="ks" x="1226" y="564">:</text><text class="kk" x="1235" y="571">;</text><text class="ks" x="1253" y="565">@</text><text class="ks" x="1272" y="567">~</text><text class="kk" x="1281" y="570">#</text>
<text class="kb" x="989" y="588" textLength="24" lengthAdjust="spacingAndGlyphs">Shift</text>
<text class="ks" x="1021" y="587">|</text><text class="kk" x="1029" y="593">\</text>
<text class="kk" x="1046.500" y="588">z</text><text class="kk" x="1068" y="588">x</text><text class="kk" x="1091" y="588">c</text><text class="kk" x="1113" y="588">v</text><text class="kk" x="1135" y="588">b</text><text class="kk" x="1157" y="588">n</text><text class="kk" x="1181" y="588">m</text>
<text class="ks" x="1198" y="586">&lt;</text><text class="kk" x="1204" y="593">,</text><text class="ks" x="1220" y="586">&gt;</text><text class="kk" x="1227" y="593">.</text><text class="ks" x="1241" y="586">?</text><text class="kk" x="1249" y="593">/</text>
<path d="M1263 588l6-6 6 6" fill="none" stroke="#e6e6e6" stroke-width="1.100"/>
<text class="kb" x="1286" y="588" textLength="16" lengthAdjust="spacingAndGlyphs">Shi</text>
<text class="kb" x="1308" y="588" textLength="17" lengthAdjust="spacingAndGlyphs">Del</text>
<text class="kb" x="990" y="611" textLength="12" lengthAdjust="spacingAndGlyphs">Fn</text>
<text class="kb" x="1012" y="611" textLength="15.500" lengthAdjust="spacingAndGlyphs">Ctr</text>
<g fill="#fff"><rect x="1031" y="600.500" width="6" height="6"/><rect x="1037.800" y="600" width="6.500" height="6.500"/><rect x="1031" y="607.500" width="6" height="6"/><rect x="1037.800" y="607.500" width="6.500" height="6.500"/></g>
<text class="kb" x="1055" y="610" textLength="15" lengthAdjust="spacingAndGlyphs">Alt</text>
<text class="kb" x="1200" y="610" textLength="16" lengthAdjust="spacingAndGlyphs">Alt</text>
<text class="kb" x="1222" y="610" textLength="16" lengthAdjust="spacingAndGlyphs">Ctr</text>
<path d="M1250.500 601l-5 6 5 6M1266 602l6 6 6-6M1289 601l5 6-5 6" fill="none" stroke="#e6e6e6" stroke-width="1.100"/>
<path d="M1313.500 600h9v14h-9zM1313.500 603h9M1315.500 607h5M1315.500 610h5" fill="none" stroke="#fff" stroke-width="1.100"/>
<text class="kb" x="1343" y="521" textLength="35" lengthAdjust="spacingAndGlyphs">Home</text>
<text class="kb" x="1343" y="544" textLength="20" lengthAdjust="spacingAndGlyphs">End</text>
<text class="kb" x="1343" y="566" textLength="29" lengthAdjust="spacingAndGlyphs">Insert</text>
<text x="1343" y="588" textLength="33" lengthAdjust="spacingAndGlyphs" style="fill:#222;font-size:13px">PrtScn</text>
<text class="kb" x="1343" y="611" textLength="41" lengthAdjust="spacingAndGlyphs">Options</text>
<text class="kb" x="1410" y="521" textLength="31" lengthAdjust="spacingAndGlyphs">PgUp</text>
<text class="kb" x="1410" y="544" textLength="30" lengthAdjust="spacingAndGlyphs">PgDn</text>
<text class="kb" x="1410" y="566" textLength="31" lengthAdjust="spacingAndGlyphs">Pause</text>
<text class="kb" x="1410" y="588" textLength="29" lengthAdjust="spacingAndGlyphs">ScrLk</text>
<text class="kb" x="1410" y="611" textLength="24" lengthAdjust="spacingAndGlyphs">Help</text>
<text class="kb" x="1479" y="521" textLength="24" lengthAdjust="spacingAndGlyphs">Nav</text>
<text class="kb" x="1479" y="544" textLength="36" lengthAdjust="spacingAndGlyphs">Mv Up</text>
<text class="kb" x="1479" y="566" textLength="36" lengthAdjust="spacingAndGlyphs">Mv Dn</text>
<text x="1479" y="588" textLength="27" lengthAdjust="spacingAndGlyphs" style="fill:#6e6e6e;font-size:13px">Dock</text>
<text class="kb" x="1479" y="610" textLength="25" lengthAdjust="spacingAndGlyphs">Fade</text>

<!-- toast -->
<rect x="1220" y="717" width="364" height="131" fill="#383838"/>
<rect x="1236" y="736" width="16" height="16" fill="#2f2f2f"/><path d="M1240 740h5v11h-5Z" fill="#f6d36a"/><path d="M1245 750c0-3 2-4 4-4 1 0 3 1 3 4Z" fill="#2e9ce6"/>
<text x="1260" y="748" textLength="50" lengthAdjust="spacingAndGlyphs" style="fill:#f0f0f0;font-size:14px">OneDrive</text>
<path d="M1551 738.500l10 10M1561 738.500l-10 10" stroke="#a8a8a8" stroke-width="1.100"/>
<circle cx="1261" cy="793" r="12.800" fill="#0364b8"/>
<circle cx="1250" cy="802" r="11" fill="#0f78d4"/>
<path d="M1262 796c4-5 9-7 13-6 6 1 10 4 11 8l-18 6Z" fill="#1490df"/>
<circle cx="1282" cy="804" r="11.500" fill="#1490df"/>
<path d="M1239 807 1268 796 1293 808Q1293 816 1284 816H1250Q1240 816 1239 807Z" fill="#28a8ea"/>
<text x="1312" y="783" textLength="117" lengthAdjust="spacingAndGlyphs" style="fill:#f3f3f3;font-size:15px;font-weight:bold">Screenshot saved</text>
<text x="1312" y="803" textLength="227" lengthAdjust="spacingAndGlyphs" style="fill:#a3a3a3;font-size:15px">The screenshot was added to your</text>
<text x="1312" y="823" textLength="65" lengthAdjust="spacingAndGlyphs" style="fill:#a3a3a3;font-size:15px">OneDrive.</text>
</svg>
<div class="l" style="top:297.5px">Design the beam shown in Fig.3.24. The</div>
<div class="l" style="top:321.5px">beam is subjected to a positive bending</div>
<div class="l" style="top:346px">moment of 540 kN-m, which is shown by the</div>
<div class="l" style="top:370.5px;text-align:left;text-align-last:left;white-space:pre">double arrowed  vector  M.</div>
<div class="l" style="top:418.5px;text-align:left;text-align-last:left">Materials: C16 and S420</div>
</body></html>
